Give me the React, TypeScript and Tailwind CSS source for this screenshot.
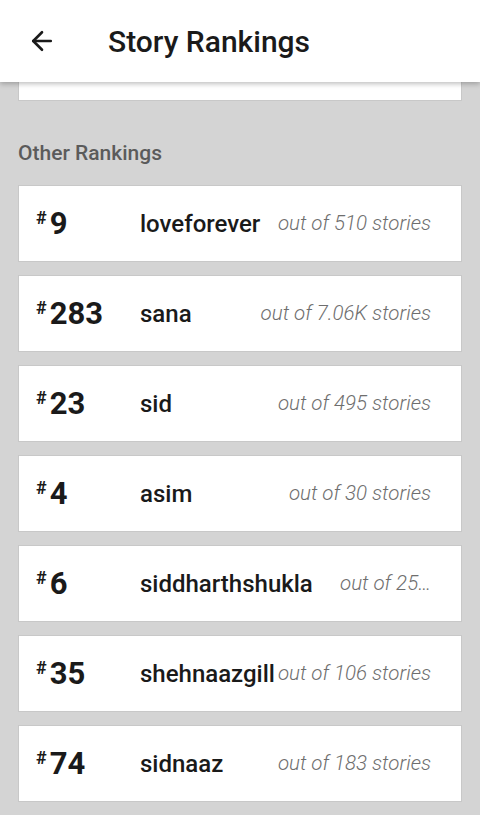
import { ArrowLeft } from 'lucide-react'

const rankings = [
  { rank: '9', tag: 'loveforever', total: 'out of 510 stories' },
  { rank: '283', tag: 'sana', total: 'out of 7.06K stories' },
  { rank: '23', tag: 'sid', total: 'out of 495 stories' },
  { rank: '4', tag: 'asim', total: 'out of 30 stories' },
  { rank: '6', tag: 'siddharthshukla', total: 'out of 25…' },
  { rank: '35', tag: 'shehnaazgill', total: 'out of 106 stories' },
  { rank: '74', tag: 'sidnaaz', total: 'out of 183 stories' },
]

export default function App() {
  return (
    <main className="h-[815px] overflow-hidden bg-[#d4d4d4] font-['Roboto',sans-serif]">
      <header className="relative z-10 flex h-[82px] items-center bg-white shadow-[0_2px_5px_rgba(0,0,0,0.25)]">
        <button className="ml-[27px] flex h-[30px] w-[30px] items-center justify-center text-[#1a1a1a]">
          <ArrowLeft size={30} strokeWidth={2.1} />
        </button>
        <h1 className="ml-[51px] text-[30px] font-medium text-[#1a1a1a]">Story Rankings</h1>
      </header>

      <div className="mx-[18px] h-[19px] border-x border-b border-[#c8c8c8] bg-white" />

      <h2 className="mx-[18px] mt-[37px] text-[21px] font-medium leading-[30px] text-[#5b5b5b]">Other Rankings</h2>

      <div className="mx-[18px] mt-[17px] flex flex-col gap-[13px]">
        {rankings.map((r) => (
          <div
            key={r.tag}
            className="flex h-[77px] items-center border border-[#c8c8c8] bg-white pl-[17px] pr-[30px]"
          >
            <div className="flex w-[104px] shrink-0 items-start text-[#1a1a1a]">
              <span className="mt-[1px] mr-[3px] text-[18px] font-bold leading-none">#</span>
              <span className="text-[31px] font-bold leading-none">{r.rank}</span>
            </div>
            <span className="shrink-0 text-[24px] font-medium text-[#1a1a1a]">{r.tag}</span>
            <span className="flex-1 whitespace-nowrap text-right text-[20.5px] font-light italic text-[#6e6e6e]">
              {r.total}
            </span>
          </div>
        ))}
      </div>
    </main>
  )
}
